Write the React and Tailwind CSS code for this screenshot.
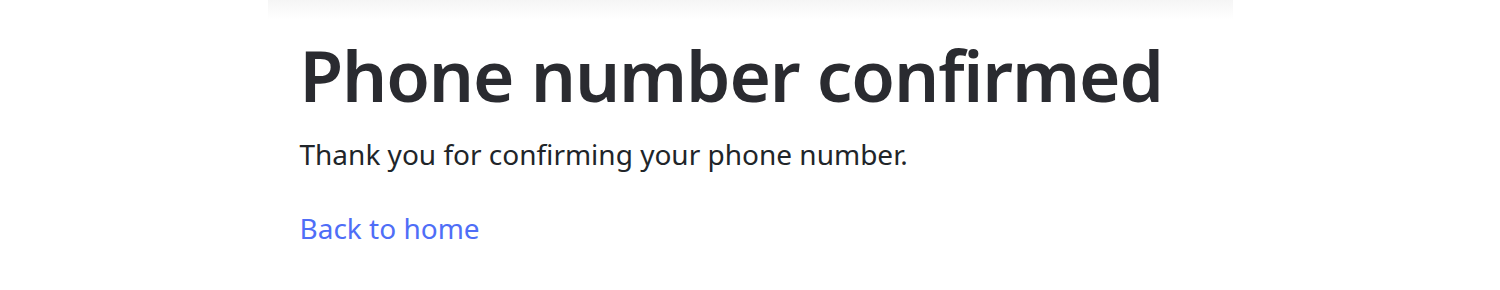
export default function App() {
  return (
    <div className="min-h-[290px] w-full bg-white">
      <div className="mx-auto w-[965px] font-['Noto_Sans',sans-serif]">
        <div className="h-5 bg-gradient-to-b from-[#f5f5f5] to-white" />
        <div className="px-8 pt-[12px]">
          <h1 className="text-[71px] font-semibold leading-[86px] tracking-[-0.016em] text-[#2a2b30] whitespace-nowrap">
            Phone number confirmed
          </h1>
          <p className="mt-4 text-[28px] leading-[40px] text-[#212529]">Thank you for confirming your phone number.</p>
          <a href="#" className="mt-[34px] inline-block text-[28px] leading-[40px] text-[#4f6ef7]">
            Back to home
          </a>
        </div>
      </div>
    </div>
  );
}
